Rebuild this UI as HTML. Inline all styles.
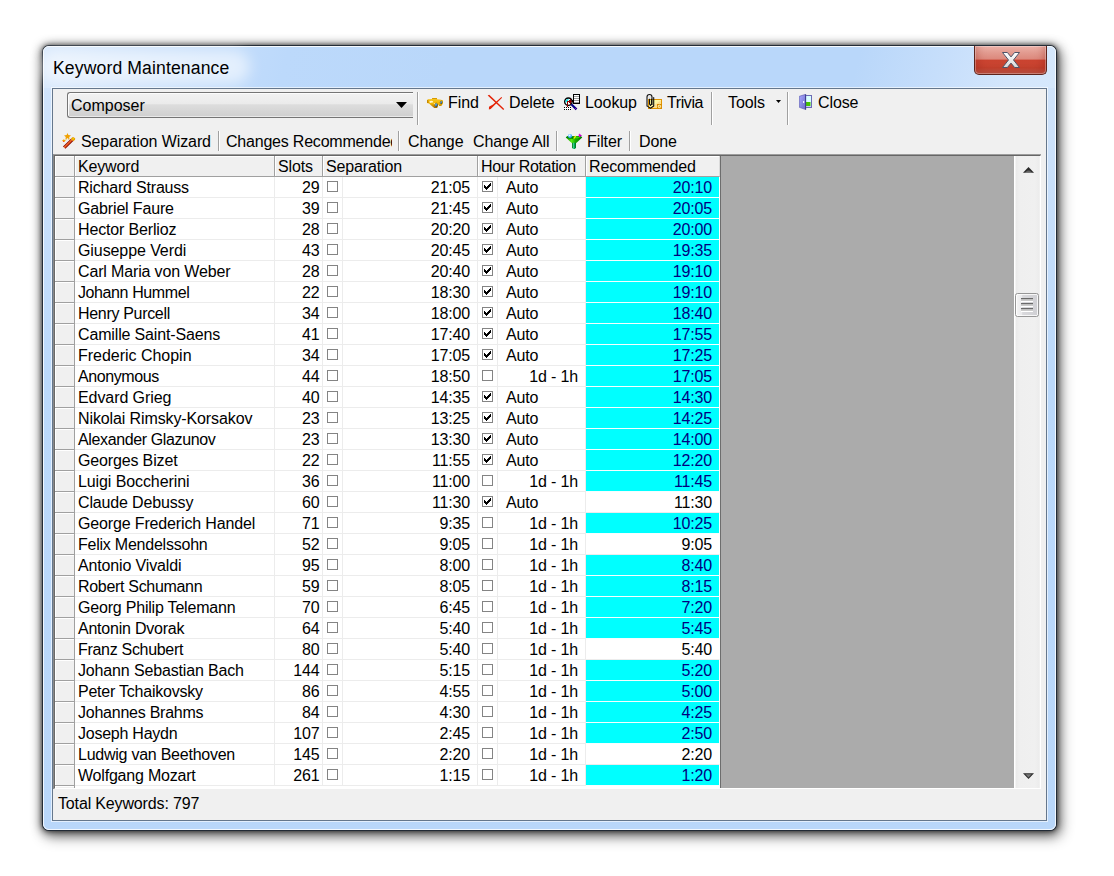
<!DOCTYPE html>
<html lang="en"><head><meta charset="utf-8"><title>Keyword Maintenance</title>
<style>
html,body{margin:0;padding:0;}
body{width:1114px;height:876px;background:#fff;position:relative;overflow:hidden;font-family:"Liberation Sans",Arial,sans-serif;font-size:16px;color:#000;}
.abs{position:absolute;}
.win{position:absolute;left:43px;top:46px;width:1013px;height:784px;border-radius:6px;background:linear-gradient(#d2e5fb 0px,#cfe3fb 60px,#bbd9fb 330px,#b9d7fa 100%);
 box-shadow:0 0 0 1px rgba(30,40,52,.92), 0 0 4px 1px rgba(0,0,0,.55), 0 1px 10px 2px rgba(0,0,0,.5), 3px 5px 14px 2px rgba(0,0,0,.44);}
.win:before{content:"";position:absolute;left:0;top:0;right:0;bottom:0;border-radius:6px;border:1px solid rgba(255,255,255,.8);}
.glass{position:absolute;left:1px;top:1px;right:1px;height:41px;border-radius:5px 5px 0 0;
 background:linear-gradient(105deg,#d9e9fc 0%,#cfe3fb 8%,#bcd9fb 24%,#b9d7fa 40%,#b9d7fa 80%,#c6defb 88%,#d3e6fc 95%,#d6e8fc 100%);}
.glow{position:absolute;left:40px;top:50px;width:210px;height:34px;border-radius:17px;background:rgba(255,255,255,.55);filter:blur(7px);}
.title{position:absolute;left:53px;top:57px;font-size:17.6px;line-height:22px;white-space:nowrap;color:#000;letter-spacing:0.12px;}
.closebtn{position:absolute;left:974px;top:46px;width:73px;height:29px;border-radius:0 0 5px 5px;box-sizing:border-box;border:1px solid #5e241c;border-top:none;
 background:linear-gradient(#ecb1a8 0%,#e29a8f 25%,#dc887c 47%,#cb4431 50%,#cf4934 78%,#d97966 100%);box-shadow:inset 0 0 0 1px rgba(255,255,255,.3), inset 8px -10px 8px -6px rgba(140,30,20,.35), inset -8px -10px 8px -6px rgba(140,30,20,.35);}
.client{position:absolute;left:52px;top:88px;width:995px;height:733px;box-sizing:border-box;background:#f0f0f0;border:1px solid #65778c;box-shadow:0 0 0 1px rgba(255,255,255,.6);}
.combo{position:absolute;left:67px;top:92px;width:346px;height:26px;box-sizing:border-box;border:1px solid #757575;border-right:none;border-radius:3px 0 0 3px;
 background:linear-gradient(#f2f2f2 0%,#ebebeb 45%,#dddddd 49%,#cfcfcf 100%);box-shadow:inset 1px 1px 0 #fcfcfc, inset 0 -1px 0 #e9e9e9;}
.combo span{position:absolute;left:3px;top:4px;line-height:18px;letter-spacing:0;}
.tb{position:absolute;white-space:nowrap;line-height:18px;letter-spacing:-0.1px;}
.vsep{position:absolute;width:1px;background:#a0a0a0;box-shadow:1px 0 0 #fff;}
.gridouter{position:absolute;left:53px;top:154px;width:988px;height:635px;box-sizing:border-box;border-top:1px solid #9c9c9c;border-left:1px solid #8a8a8a;}
.grid{position:absolute;left:54px;top:155px;width:987px;height:634px;box-sizing:border-box;background:#ababab;border-top:1px solid #666;border-left:1px solid #6a6a6a;border-right:1px solid #fff;border-bottom:1px solid #fff;overflow:hidden;}
.grid:after{content:"";position:absolute;left:-2px;top:-2px;right:0;height:1px;background:#8c8c8c;}
.hdr{position:absolute;left:0;top:0;height:21px;width:665px;}
.hc{position:absolute;top:0;height:21px;box-sizing:border-box;background:#f0f0f0;border-right:1px solid #a0a0a0;border-bottom:1px solid #a0a0a0;box-shadow:inset 1px 1px 0 #fff;line-height:21px;padding-left:3px;letter-spacing:-0.15px;white-space:nowrap;overflow:hidden;}
.row{position:absolute;left:0;height:21px;width:665px;}
.c{position:absolute;top:0;height:21px;box-sizing:border-box;background:#fff;border-right:1px solid #ececec;border-bottom:1px solid #ececec;line-height:22px;letter-spacing:-0.15px;white-space:nowrap;overflow:hidden;}
.h0,.c0{left:0;width:20px;}
.c0{background:#f0f0f0;border-right:1px solid #a0a0a0;border-bottom:1px solid #a0a0a0;box-shadow:inset 1px 1px 0 #fff;}
.h1,.c1{left:20px;width:200px;}
.c1{padding-left:3px;}
.h2,.c2{left:220px;width:48px;}
.c2{text-align:right;padding-right:2.4px;}
.h3{left:268px;width:155px;}
.c3a{left:268px;width:20px;}
.c3b{left:288px;width:135px;text-align:right;padding-right:7px;}
.h4{left:423px;width:108px;letter-spacing:-0.3px;}
.c4a{left:423px;width:20px;}
.c4b{left:443px;width:88px;}
.h5,.c5{left:531px;width:134px;}
.c5{text-align:right;padding-right:7px;border-right:1px solid #fff;}
.h5{border-right-color:#dadada;}
.vline{position:absolute;left:665px;top:0;width:1px;height:633px;background:#6d6d6d;}
.prow{position:absolute;left:20px;top:630px;width:645px;height:3px;background:#fff;}
.cy{background:#00ffff;color:#000080;border-bottom-color:#f4ffff;}
.au{position:absolute;left:8px;}
.dh{position:absolute;right:7px;}
.cb{position:absolute;left:4px;top:4px;width:11px;height:11px;box-sizing:border-box;border:1px solid #848484;background:#fff;}
.cb svg{position:absolute;left:0;top:0;}
.lastrow{position:absolute;left:0;top:630px;height:3px;width:20px;box-sizing:border-box;background:#f0f0f0;border-right:1px solid #a0a0a0;box-shadow:inset 1px 1px 0 #fff;}
.sb{position:absolute;left:1014px;top:156px;width:26px;height:632px;background:#f0f0f0;border-left:1px solid #e6e6e6;box-sizing:border-box;}
.status{position:absolute;left:58px;top:795px;line-height:18px;white-space:nowrap;letter-spacing:-0.15px;}
.sb{background:linear-gradient(90deg,#fff 0,#fff 1px,#eaeaea 2px,#efefef 5px,#f0f0f0 21px,#ececec 25px,#f4f4f4 26px);border-left:none;}
.thumb{position:absolute;left:1015px;top:293px;width:24px;height:24px;box-sizing:border-box;border:1px solid #979797;border-radius:2.5px;background:linear-gradient(90deg,#f5f5f5 0%,#e9e9eb 28%,#d9d9dc 30%,#cfcfd3 100%);box-shadow:inset 0 0 0 1px rgba(255,255,255,.8);}
.thumb i{position:absolute;left:5px;width:12px;height:4px;background:linear-gradient(#5a5a5a 0,#7a7a7a 1px,#b8b8b8 1px,#d0d0d0 3px,#fff 3px,#fff 4px);}
.thumb i:nth-child(1){top:4px}.thumb i:nth-child(2){top:9px}.thumb i:nth-child(3){top:14px}

</style></head>
<body>
<div class="win"><div class="glass"></div></div>
<div class="glow"></div>
<div class="title">Keyword Maintenance</div>
<div class="closebtn"><svg class="abs" style="left:26px;top:5px" width="20" height="18" viewBox="0 0 20 18"><defs><linearGradient id="gX" x1="0" y1="0" x2="0" y2="1"><stop offset="0" stop-color="#fff"/><stop offset="1" stop-color="#d8d8d8"/></linearGradient></defs><path d="M1.5 1.5 L6.4 1.5 L10 5.9 L13.6 1.5 L18.5 1.5 L12.5 9 L18.5 16.5 L13.6 16.5 L10 12.1 L6.4 16.5 L1.5 16.5 L7.5 9 Z" fill="url(#gX)" stroke="#4f5468" stroke-width="1" stroke-linejoin="round"/></svg></div>
<div class="client"></div>
<div class="combo"><span>Composer</span><svg class="abs" style="left:328px;top:9px" width="11" height="6" viewBox="0 0 11 6"><path d="M0 0 H11 L5.5 6 Z" fill="#000"/></svg></div>
<div class="vsep" style="left:417px;top:92px;height:33px"></div>
<div class="tb" style="left:448px;top:94px">Find</div>
<div class="tb" style="left:509px;top:94px">Delete</div>
<div class="tb" style="left:585px;top:94px">Lookup</div>
<div class="tb" style="left:667px;top:94px;letter-spacing:-0.4px">Trivia</div>
<div class="vsep" style="left:711px;top:92px;height:33px"></div>
<div class="tb" style="left:728px;top:94px">Tools</div>
<div class="vsep" style="left:787px;top:92px;height:33px"></div>
<div class="tb" style="left:818px;top:94px">Close</div>
<div class="tb" style="left:81px;top:133px">Separation Wizard</div>
<div class="vsep" style="left:218px;top:131px;height:20px"></div>
<div class="tb" style="left:226px;top:133px;width:166px;overflow:hidden;letter-spacing:-0.21px">Changes Recommended</div>
<div class="vsep" style="left:398px;top:131px;height:20px"></div>
<div class="tb" style="left:408px;top:133px">Change</div>
<div class="tb" style="left:473px;top:133px">Change All</div>
<div class="vsep" style="left:556px;top:131px;height:20px"></div>
<div class="tb" style="left:587px;top:133px">Filter</div>
<div class="vsep" style="left:629px;top:131px;height:20px"></div>
<div class="tb" style="left:639px;top:133px">Done</div>
<!-- Find: binoculars -->
<svg class="abs" style="left:427px;top:98px" width="16" height="10" viewBox="0 0 16 10">
<defs><linearGradient id="gG" x1="0" y1="0" x2="0" y2="1"><stop offset="0" stop-color="#f7c72a"/><stop offset=".55" stop-color="#f0b400"/><stop offset="1" stop-color="#a86a00"/></linearGradient>
<linearGradient id="gL" x1="0" y1="0" x2="1" y2="1"><stop offset="0" stop-color="#9fd8ff"/><stop offset=".55" stop-color="#3f8fdc"/><stop offset="1" stop-color="#10305c"/></linearGradient></defs>
<path d="M0 2.3 L1.2 1.3 L5 1 L5.2 0 L9.9 0 L10.1 1.2 L13 1.5 L16 2.2 L16 5.4 L14.3 7.9 L12.1 7.9 L11.5 6.6 L11 6.7 L10.9 8.6 L10.1 10 L7.2 10 L2 5.6 L0 5.1 Z" fill="url(#gG)"/>
<path d="M0 2.3 L1.2 1.6 L1.6 4.9 L0 5.1 Z" fill="#c88a00"/>
<path d="M5.2 0 H9.9 L10 1 H5.1 Z" fill="#d79a00"/>
<path d="M2.3 3.4 Q4 2 6 3.2 L6.2 4.6 Q4.5 4.2 3 5 Z" fill="#fff6d0"/>
<path d="M6.7 5.2 L8.4 4.9 L8.2 6 L7 6.4 Z" fill="#ffe9a0"/>
<ellipse cx="9.2" cy="7" rx="1.35" ry="1.9" transform="rotate(14 9.2 7)" fill="url(#gL)" stroke="#5a4300" stroke-width=".4"/>
<ellipse cx="14.2" cy="4.4" rx="1.05" ry="1.5" transform="rotate(14 14.2 4.4)" fill="url(#gL)" stroke="#5a4300" stroke-width=".4"/>
</svg>
<!-- Delete: red X -->
<svg class="abs" style="left:487px;top:94px" width="18" height="17" viewBox="0 0 18 17">
<path d="M0.7 1.6 L2.2 0.8 L17.2 14.9 L16.3 16 Z" fill="#e42306"/>
<path d="M14.4 3 L15.1 3.8 L3.7 15 L1.9 15.5 L2 12.8 L6 10.4 Z" fill="#e42306"/>
</svg>
<!-- Lookup -->
<svg class="abs" style="left:563px;top:93px" width="18" height="18" viewBox="0 0 18 18" shape-rendering="crispEdges">
<rect x="10.5" y="1.5" width="6" height="9" fill="#fff" stroke="#000" stroke-width="1"/>
<path d="M11 3.5H16M11 5.5H16M11 7.5H16M11 9.5H16" stroke="#9a9a9a" stroke-width="1"/>
<rect x="9" y="7" width="2" height="2" fill="#000"/>
<g shape-rendering="auto"><circle cx="5.4" cy="8.7" r="3.7" fill="#fff" stroke="#000" stroke-width="1.4"/>
<path d="M2.4 9.2 A3.2 3.2 0 0 1 5 5.9 L5.8 6.7 L3.3 9.6 Z" fill="#00f0f0"/></g>
<path d="M4 13V8H6V7H7V6H8V8H9V9H8V11H7V10H6V9H5V13Z" fill="#8b0000"/>
<rect x="4" y="13" width="1" height="1.6" fill="#a00000"/>
<path d="M7.6 12 L9.2 10.7 L14.3 15.6 L12.7 17.3 Z" fill="#00008b" shape-rendering="auto"/>
<rect x="12" y="15" width="1" height="1" fill="#a000a0"/>
<rect x="1" y="14" width="7" height="3" fill="#fff"/><path d="M1 14h1v1h-1zM3 14h1v1h-1zM5 14h1v1h-1zM7 14h1v1h-1zM1 16h1v1h-1zM3 16h1v1h-1zM5 16h1v1h-1zM7 16h1v1h-1z" fill="#000"/>
</svg>
<!-- Trivia -->
<svg class="abs" style="left:645px;top:93px" width="18" height="17" viewBox="0 0 18 17">
<defs><linearGradient id="gN" x1="0" y1="0" x2="1" y2="1"><stop offset="0" stop-color="#ffffa0"/><stop offset=".5" stop-color="#fff7a0"/><stop offset=".55" stop-color="#ffe090"/><stop offset="1" stop-color="#ffe070"/></linearGradient></defs>
<rect x="3.5" y="6.5" width="13" height="9" fill="url(#gN)" stroke="#e09400" stroke-width="1"/>
<rect x="12.5" y="11.5" width="4" height="4" fill="#e8a820" stroke="#d88c00" stroke-width="1"/>
<circle cx="14.4" cy="13.4" r="1.2" fill="none" stroke="#fffbd0" stroke-width=".9"/>
<path d="M2 13 V4 Q2 1.5 4.5 1.5 Q7 1.5 7 4 V11.5 M4.5 6 V11 L5.5 12.5 L6.5 11 V6 M8.7 4.5 V13 L5.5 15.3 L2.7 13.4" fill="none" stroke="#111" stroke-width="1.1" stroke-linejoin="round" stroke-linecap="round"/>
<path d="M3.2 4.5 Q3.2 2.8 4.5 2.8 Q5.8 2.8 5.8 4.5 V5.5 H3.2 Z" fill="#e6e6e6" opacity=".9"/>
</svg>
<!-- Tools arrow -->
<svg class="abs" style="left:776px;top:100px" width="5" height="3" viewBox="0 0 5 3"><path d="M0 0H5L2.5 3Z" fill="#000"/></svg>
<!-- Close: door -->
<svg class="abs" style="left:799px;top:94px" width="14" height="16" viewBox="0 0 14 16">
<defs><linearGradient id="gD" x1="0" y1="0" x2="1" y2="1"><stop offset="0" stop-color="#a8a8ff"/><stop offset="1" stop-color="#6a68c8"/></linearGradient></defs>
<rect x="6.5" y="1.5" width="6" height="12" fill="#d9ffff" stroke="#6c6cb4" stroke-width="1"/>
<rect x="7" y="8" width="4.5" height="4" fill="#44c400"/>
<rect x="7" y="12" width="5" height="1" fill="#c8c8ff"/>
<path d="M0.3 2.3 L6.8 0.3 V15.6 L0.3 13.3 Z" fill="url(#gD)" stroke="#5454a8" stroke-width=".6"/>
<path d="M6 0.5 H6.9 V15.5 H6 Z" fill="#3c3c8c"/>
<rect x="4" y="7" width="1.2" height="2" fill="#eef"/>
</svg>
<!-- Wizard wand -->
<svg class="abs" style="left:61px;top:132px" width="15" height="17" viewBox="0 0 15 17">
<defs><linearGradient id="gW" gradientUnits="userSpaceOnUse" x1="5.9" y1="10.4" x2="8.5" y2="13"><stop offset="0" stop-color="#7c0000"/><stop offset=".2" stop-color="#8c0800"/><stop offset=".38" stop-color="#ff7a38"/><stop offset=".62" stop-color="#e04c10"/><stop offset=".8" stop-color="#8c0800"/><stop offset="1" stop-color="#7c0000"/></linearGradient></defs>
<path d="M6.5 1 L7.4 3 L10 3.4 L8.2 5 L8.5 7.4 L7.3 7.4 L7.2 6.3 L5.8 6.3 L5.7 7.4 L4.4 7.4 L4.8 5 L3 3.4 L5.6 3 Z" fill="#f0a000"/>
<path d="M2.9 7.1 L3.6 8 L5.1 8.4 L3.9 9.1 L3.9 10 L2.9 9.6 L1.9 10 L1.9 9.1 L0.8 8.4 L2.2 8 Z" fill="#f2a200"/>
<rect x="2" y="9" width="1" height="1" fill="#ff5030"/>
<path d="M10 6.8 L12.3 9 L4.4 16.7 L2 14.6 Z" fill="url(#gW)"/>
<path d="M9.9 6.8 L11.2 5.2 L12.8 5.3 L14.2 6.6 L14 7.8 L12.4 9.2 Z" fill="#e89a00"/>
<path d="M11 7 L12.6 5.9 L13.2 6.6 L11.8 7.9 Z" fill="#f0e000"/>
</svg>
<!-- Filter funnel -->
<svg class="abs" style="left:565px;top:132px" width="18" height="17" viewBox="0 0 18 17">
<defs><linearGradient id="gF" x1="0" y1="0" x2="1" y2="0"><stop offset="0" stop-color="#0a8a00"/><stop offset=".35" stop-color="#56ec10"/><stop offset=".6" stop-color="#16a800"/><stop offset="1" stop-color="#007800"/></linearGradient>
<linearGradient id="gS" x1="0" y1="0" x2="1" y2="0"><stop offset="0" stop-color="#007000"/><stop offset=".45" stop-color="#40e0a0"/><stop offset=".6" stop-color="#00a860"/><stop offset="1" stop-color="#007000"/></linearGradient>
<radialGradient id="gB" cx=".4" cy=".35" r=".7"><stop offset="0" stop-color="#fff"/><stop offset=".5" stop-color="#58b8ff"/><stop offset="1" stop-color="#1890f0"/></radialGradient></defs>
<path d="M0.8 5.6 L2.2 4.3 L15.8 4.3 L17.2 5.6 L11 11.2 L7 11.2 Z" fill="url(#gF)"/>
<path d="M0.8 5.6 L2.2 4.3 L15.8 4.3 L17.2 5.6 L14.5 6.4 L9 7 L3.5 6.4 Z" fill="#008400"/>
<path d="M8 6.8 L10 4.6 L15.5 5 L13 6.6 Z" fill="#38d800"/>
<path d="M7 10.8 H11 V15.8 L9.8 16.9 H8.2 L7 15.8 Z" fill="url(#gS)"/>
<circle cx="5" cy="4" r="2.1" fill="url(#gB)"/>
<path d="M8.2 6.2 L10.2 3.6 L11.2 4.4 L9.4 6.8 Z" fill="#ffee00"/>
<path d="M14 1.6 L15.5 2.6 L16.8 3.4 L15.5 4.6 L14.2 5.2 L13.6 3.6 Z" fill="#e000e0"/>
<path d="M15.4 3.2 L16.8 3.4 L15.5 4.6 Z" fill="#900090"/>
</svg>
<div class="gridouter"></div>
<div class="grid">
<div class="hdr"><div class="hc h0"></div><div class="hc h1">Keyword</div><div class="hc h2">Slots</div><div class="hc h3">Separation</div><div class="hc h4">Hour Rotation</div><div class="hc h5">Recommended</div></div>
<div class="row" style="top:21px"><div class="c c0"></div><div class="c c1" style="letter-spacing:-0.193px">Richard Strauss</div><div class="c c2">29</div><div class="c c3a"><i class="cb"></i></div><div class="c c3b">21:05</div><div class="c c4a"><i class="cb on"><svg viewBox="0 0 9 9" width="9" height="9" shape-rendering="crispEdges"><path d="M1 3h1v3h-1zM2 4h1v3h-1zM3 5h1v3h-1zM4 4h1v3h-1zM5 3h1v3h-1zM6 2h1v3h-1zM7 1h1v3h-1z" fill="#000"/></svg></i></div><div class="c c4b"><span class="au">Auto</span></div><div class="c c5 cy">20:10</div></div>
<div class="row" style="top:42px"><div class="c c0"></div><div class="c c1" style="letter-spacing:-0.150px">Gabriel Faure</div><div class="c c2">39</div><div class="c c3a"><i class="cb"></i></div><div class="c c3b">21:45</div><div class="c c4a"><i class="cb on"><svg viewBox="0 0 9 9" width="9" height="9" shape-rendering="crispEdges"><path d="M1 3h1v3h-1zM2 4h1v3h-1zM3 5h1v3h-1zM4 4h1v3h-1zM5 3h1v3h-1zM6 2h1v3h-1zM7 1h1v3h-1z" fill="#000"/></svg></i></div><div class="c c4b"><span class="au">Auto</span></div><div class="c c5 cy">20:05</div></div>
<div class="row" style="top:63px"><div class="c c0"></div><div class="c c1" style="letter-spacing:-0.150px">Hector Berlioz</div><div class="c c2">28</div><div class="c c3a"><i class="cb"></i></div><div class="c c3b">20:20</div><div class="c c4a"><i class="cb on"><svg viewBox="0 0 9 9" width="9" height="9" shape-rendering="crispEdges"><path d="M1 3h1v3h-1zM2 4h1v3h-1zM3 5h1v3h-1zM4 4h1v3h-1zM5 3h1v3h-1zM6 2h1v3h-1zM7 1h1v3h-1z" fill="#000"/></svg></i></div><div class="c c4b"><span class="au">Auto</span></div><div class="c c5 cy">20:00</div></div>
<div class="row" style="top:84px"><div class="c c0"></div><div class="c c1" style="letter-spacing:-0.088px">Giuseppe Verdi</div><div class="c c2">43</div><div class="c c3a"><i class="cb"></i></div><div class="c c3b">20:45</div><div class="c c4a"><i class="cb on"><svg viewBox="0 0 9 9" width="9" height="9" shape-rendering="crispEdges"><path d="M1 3h1v3h-1zM2 4h1v3h-1zM3 5h1v3h-1zM4 4h1v3h-1zM5 3h1v3h-1zM6 2h1v3h-1zM7 1h1v3h-1z" fill="#000"/></svg></i></div><div class="c c4b"><span class="au">Auto</span></div><div class="c c5 cy">19:35</div></div>
<div class="row" style="top:105px"><div class="c c0"></div><div class="c c1" style="letter-spacing:-0.150px">Carl Maria von Weber</div><div class="c c2">28</div><div class="c c3a"><i class="cb"></i></div><div class="c c3b">20:40</div><div class="c c4a"><i class="cb on"><svg viewBox="0 0 9 9" width="9" height="9" shape-rendering="crispEdges"><path d="M1 3h1v3h-1zM2 4h1v3h-1zM3 5h1v3h-1zM4 4h1v3h-1zM5 3h1v3h-1zM6 2h1v3h-1zM7 1h1v3h-1z" fill="#000"/></svg></i></div><div class="c c4b"><span class="au">Auto</span></div><div class="c c5 cy">19:10</div></div>
<div class="row" style="top:126px"><div class="c c0"></div><div class="c c1" style="letter-spacing:-0.400px">Johann Hummel</div><div class="c c2">22</div><div class="c c3a"><i class="cb"></i></div><div class="c c3b">18:30</div><div class="c c4a"><i class="cb on"><svg viewBox="0 0 9 9" width="9" height="9" shape-rendering="crispEdges"><path d="M1 3h1v3h-1zM2 4h1v3h-1zM3 5h1v3h-1zM4 4h1v3h-1zM5 3h1v3h-1zM6 2h1v3h-1zM7 1h1v3h-1z" fill="#000"/></svg></i></div><div class="c c4b"><span class="au">Auto</span></div><div class="c c5 cy">19:10</div></div>
<div class="row" style="top:147px"><div class="c c0"></div><div class="c c1" style="letter-spacing:-0.317px">Henry Purcell</div><div class="c c2">34</div><div class="c c3a"><i class="cb"></i></div><div class="c c3b">18:00</div><div class="c c4a"><i class="cb on"><svg viewBox="0 0 9 9" width="9" height="9" shape-rendering="crispEdges"><path d="M1 3h1v3h-1zM2 4h1v3h-1zM3 5h1v3h-1zM4 4h1v3h-1zM5 3h1v3h-1zM6 2h1v3h-1zM7 1h1v3h-1z" fill="#000"/></svg></i></div><div class="c c4b"><span class="au">Auto</span></div><div class="c c5 cy">18:40</div></div>
<div class="row" style="top:168px"><div class="c c0"></div><div class="c c1" style="letter-spacing:-0.150px">Camille Saint-Saens</div><div class="c c2">41</div><div class="c c3a"><i class="cb"></i></div><div class="c c3b">17:40</div><div class="c c4a"><i class="cb on"><svg viewBox="0 0 9 9" width="9" height="9" shape-rendering="crispEdges"><path d="M1 3h1v3h-1zM2 4h1v3h-1zM3 5h1v3h-1zM4 4h1v3h-1zM5 3h1v3h-1zM6 2h1v3h-1zM7 1h1v3h-1z" fill="#000"/></svg></i></div><div class="c c4b"><span class="au">Auto</span></div><div class="c c5 cy">17:55</div></div>
<div class="row" style="top:189px"><div class="c c0"></div><div class="c c1" style="letter-spacing:-0.021px">Frederic Chopin</div><div class="c c2">34</div><div class="c c3a"><i class="cb"></i></div><div class="c c3b">17:05</div><div class="c c4a"><i class="cb on"><svg viewBox="0 0 9 9" width="9" height="9" shape-rendering="crispEdges"><path d="M1 3h1v3h-1zM2 4h1v3h-1zM3 5h1v3h-1zM4 4h1v3h-1zM5 3h1v3h-1zM6 2h1v3h-1zM7 1h1v3h-1z" fill="#000"/></svg></i></div><div class="c c4b"><span class="au">Auto</span></div><div class="c c5 cy">17:25</div></div>
<div class="row" style="top:210px"><div class="c c0"></div><div class="c c1" style="letter-spacing:-0.400px">Anonymous</div><div class="c c2">44</div><div class="c c3a"><i class="cb"></i></div><div class="c c3b">18:50</div><div class="c c4a"><i class="cb"></i></div><div class="c c4b"><span class="dh">1d - 1h</span></div><div class="c c5 cy">17:05</div></div>
<div class="row" style="top:231px"><div class="c c0"></div><div class="c c1" style="letter-spacing:-0.077px">Edvard Grieg</div><div class="c c2">40</div><div class="c c3a"><i class="cb"></i></div><div class="c c3b">14:35</div><div class="c c4a"><i class="cb on"><svg viewBox="0 0 9 9" width="9" height="9" shape-rendering="crispEdges"><path d="M1 3h1v3h-1zM2 4h1v3h-1zM3 5h1v3h-1zM4 4h1v3h-1zM5 3h1v3h-1zM6 2h1v3h-1zM7 1h1v3h-1z" fill="#000"/></svg></i></div><div class="c c4b"><span class="au">Auto</span></div><div class="c c5 cy">14:30</div></div>
<div class="row" style="top:252px"><div class="c c0"></div><div class="c c1" style="letter-spacing:-0.114px">Nikolai Rimsky-Korsakov</div><div class="c c2">23</div><div class="c c3a"><i class="cb"></i></div><div class="c c3b">13:25</div><div class="c c4a"><i class="cb on"><svg viewBox="0 0 9 9" width="9" height="9" shape-rendering="crispEdges"><path d="M1 3h1v3h-1zM2 4h1v3h-1zM3 5h1v3h-1zM4 4h1v3h-1zM5 3h1v3h-1zM6 2h1v3h-1zM7 1h1v3h-1z" fill="#000"/></svg></i></div><div class="c c4b"><span class="au">Auto</span></div><div class="c c5 cy">14:25</div></div>
<div class="row" style="top:273px"><div class="c c0"></div><div class="c c1" style="letter-spacing:-0.374px">Alexander Glazunov</div><div class="c c2">23</div><div class="c c3a"><i class="cb"></i></div><div class="c c3b">13:30</div><div class="c c4a"><i class="cb on"><svg viewBox="0 0 9 9" width="9" height="9" shape-rendering="crispEdges"><path d="M1 3h1v3h-1zM2 4h1v3h-1zM3 5h1v3h-1zM4 4h1v3h-1zM5 3h1v3h-1zM6 2h1v3h-1zM7 1h1v3h-1z" fill="#000"/></svg></i></div><div class="c c4b"><span class="au">Auto</span></div><div class="c c5 cy">14:00</div></div>
<div class="row" style="top:294px"><div class="c c0"></div><div class="c c1" style="letter-spacing:-0.150px">Georges Bizet</div><div class="c c2">22</div><div class="c c3a"><i class="cb"></i></div><div class="c c3b">11:55</div><div class="c c4a"><i class="cb on"><svg viewBox="0 0 9 9" width="9" height="9" shape-rendering="crispEdges"><path d="M1 3h1v3h-1zM2 4h1v3h-1zM3 5h1v3h-1zM4 4h1v3h-1zM5 3h1v3h-1zM6 2h1v3h-1zM7 1h1v3h-1z" fill="#000"/></svg></i></div><div class="c c4b"><span class="au">Auto</span></div><div class="c c5 cy">12:20</div></div>
<div class="row" style="top:315px"><div class="c c0"></div><div class="c c1" style="letter-spacing:-0.097px">Luigi Boccherini</div><div class="c c2">36</div><div class="c c3a"><i class="cb"></i></div><div class="c c3b">11:00</div><div class="c c4a"><i class="cb"></i></div><div class="c c4b"><span class="dh">1d - 1h</span></div><div class="c c5 cy">11:45</div></div>
<div class="row" style="top:336px"><div class="c c0"></div><div class="c c1" style="letter-spacing:-0.150px">Claude Debussy</div><div class="c c2">60</div><div class="c c3a"><i class="cb"></i></div><div class="c c3b">11:30</div><div class="c c4a"><i class="cb on"><svg viewBox="0 0 9 9" width="9" height="9" shape-rendering="crispEdges"><path d="M1 3h1v3h-1zM2 4h1v3h-1zM3 5h1v3h-1zM4 4h1v3h-1zM5 3h1v3h-1zM6 2h1v3h-1zM7 1h1v3h-1z" fill="#000"/></svg></i></div><div class="c c4b"><span class="au">Auto</span></div><div class="c c5">11:30</div></div>
<div class="row" style="top:357px"><div class="c c0"></div><div class="c c1" style="letter-spacing:-0.150px">George Frederich Handel</div><div class="c c2">71</div><div class="c c3a"><i class="cb"></i></div><div class="c c3b">9:35</div><div class="c c4a"><i class="cb"></i></div><div class="c c4b"><span class="dh">1d - 1h</span></div><div class="c c5 cy">10:25</div></div>
<div class="row" style="top:378px"><div class="c c0"></div><div class="c c1" style="letter-spacing:-0.231px">Felix Mendelssohn</div><div class="c c2">52</div><div class="c c3a"><i class="cb"></i></div><div class="c c3b">9:05</div><div class="c c4a"><i class="cb"></i></div><div class="c c4b"><span class="dh">1d - 1h</span></div><div class="c c5">9:05</div></div>
<div class="row" style="top:399px"><div class="c c0"></div><div class="c c1" style="letter-spacing:-0.150px">Antonio Vivaldi</div><div class="c c2">95</div><div class="c c3a"><i class="cb"></i></div><div class="c c3b">8:00</div><div class="c c4a"><i class="cb"></i></div><div class="c c4b"><span class="dh">1d - 1h</span></div><div class="c c5 cy">8:40</div></div>
<div class="row" style="top:420px"><div class="c c0"></div><div class="c c1" style="letter-spacing:-0.314px">Robert Schumann</div><div class="c c2">59</div><div class="c c3a"><i class="cb"></i></div><div class="c c3b">8:05</div><div class="c c4a"><i class="cb"></i></div><div class="c c4b"><span class="dh">1d - 1h</span></div><div class="c c5 cy">8:15</div></div>
<div class="row" style="top:441px"><div class="c c0"></div><div class="c c1" style="letter-spacing:-0.200px">Georg Philip Telemann</div><div class="c c2">70</div><div class="c c3a"><i class="cb"></i></div><div class="c c3b">6:45</div><div class="c c4a"><i class="cb"></i></div><div class="c c4b"><span class="dh">1d - 1h</span></div><div class="c c5 cy">7:20</div></div>
<div class="row" style="top:462px"><div class="c c0"></div><div class="c c1" style="letter-spacing:-0.227px">Antonin Dvorak</div><div class="c c2">64</div><div class="c c3a"><i class="cb"></i></div><div class="c c3b">5:40</div><div class="c c4a"><i class="cb"></i></div><div class="c c4b"><span class="dh">1d - 1h</span></div><div class="c c5 cy">5:45</div></div>
<div class="row" style="top:483px"><div class="c c0"></div><div class="c c1" style="letter-spacing:-0.304px">Franz Schubert</div><div class="c c2">80</div><div class="c c3a"><i class="cb"></i></div><div class="c c3b">5:40</div><div class="c c4a"><i class="cb"></i></div><div class="c c4b"><span class="dh">1d - 1h</span></div><div class="c c5">5:40</div></div>
<div class="row" style="top:504px"><div class="c c0"></div><div class="c c1" style="letter-spacing:-0.150px">Johann Sebastian Bach</div><div class="c c2">144</div><div class="c c3a"><i class="cb"></i></div><div class="c c3b">5:15</div><div class="c c4a"><i class="cb"></i></div><div class="c c4b"><span class="dh">1d - 1h</span></div><div class="c c5 cy">5:20</div></div>
<div class="row" style="top:525px"><div class="c c0"></div><div class="c c1" style="letter-spacing:-0.231px">Peter Tchaikovsky</div><div class="c c2">86</div><div class="c c3a"><i class="cb"></i></div><div class="c c3b">4:55</div><div class="c c4a"><i class="cb"></i></div><div class="c c4b"><span class="dh">1d - 1h</span></div><div class="c c5 cy">5:00</div></div>
<div class="row" style="top:546px"><div class="c c0"></div><div class="c c1" style="letter-spacing:-0.243px">Johannes Brahms</div><div class="c c2">84</div><div class="c c3a"><i class="cb"></i></div><div class="c c3b">4:30</div><div class="c c4a"><i class="cb"></i></div><div class="c c4b"><span class="dh">1d - 1h</span></div><div class="c c5 cy">4:25</div></div>
<div class="row" style="top:567px"><div class="c c0"></div><div class="c c1" style="letter-spacing:-0.241px">Joseph Haydn</div><div class="c c2">107</div><div class="c c3a"><i class="cb"></i></div><div class="c c3b">2:45</div><div class="c c4a"><i class="cb"></i></div><div class="c c4b"><span class="dh">1d - 1h</span></div><div class="c c5 cy">2:50</div></div>
<div class="row" style="top:588px"><div class="c c0"></div><div class="c c1" style="letter-spacing:-0.245px">Ludwig van Beethoven</div><div class="c c2">145</div><div class="c c3a"><i class="cb"></i></div><div class="c c3b">2:20</div><div class="c c4a"><i class="cb"></i></div><div class="c c4b"><span class="dh">1d - 1h</span></div><div class="c c5">2:20</div></div>
<div class="row" style="top:609px"><div class="c c0"></div><div class="c c1" style="letter-spacing:-0.207px">Wolfgang Mozart</div><div class="c c2">261</div><div class="c c3a"><i class="cb"></i></div><div class="c c3b">1:15</div><div class="c c4a"><i class="cb"></i></div><div class="c c4b"><span class="dh">1d - 1h</span></div><div class="c c5 cy">1:20</div></div>
<div class="lastrow"></div><div class="prow"></div><div class="vline"></div>
</div>
<div class="sb"></div>
<svg class="abs" style="left:1023px;top:167px" width="11" height="6" viewBox="0 0 11 6"><defs><linearGradient id="gA" x1="0" y1="0" x2="0" y2="1"><stop offset="0" stop-color="#222"/><stop offset="1" stop-color="#8a8a8a"/></linearGradient></defs><path d="M5.5 0 L11 5.8 L0 5.8 Z" fill="#2a2a2a"/><path d="M5.5 2.2 L9 5.8 L2 5.8 Z" fill="url(#gA)"/></svg>
<div class="thumb"><i></i><i></i><i></i></div>
<svg class="abs" style="left:1023px;top:773px" width="11" height="6" viewBox="0 0 11 6"><path d="M0 0.2 L11 0.2 L5.5 6 Z" fill="#2a2a2a"/><path d="M2.4 1.3 L8.6 1.3 L5.5 4.6 Z" fill="#777"/></svg>
<div class="status">Total Keywords: 797</div>
</body></html>
